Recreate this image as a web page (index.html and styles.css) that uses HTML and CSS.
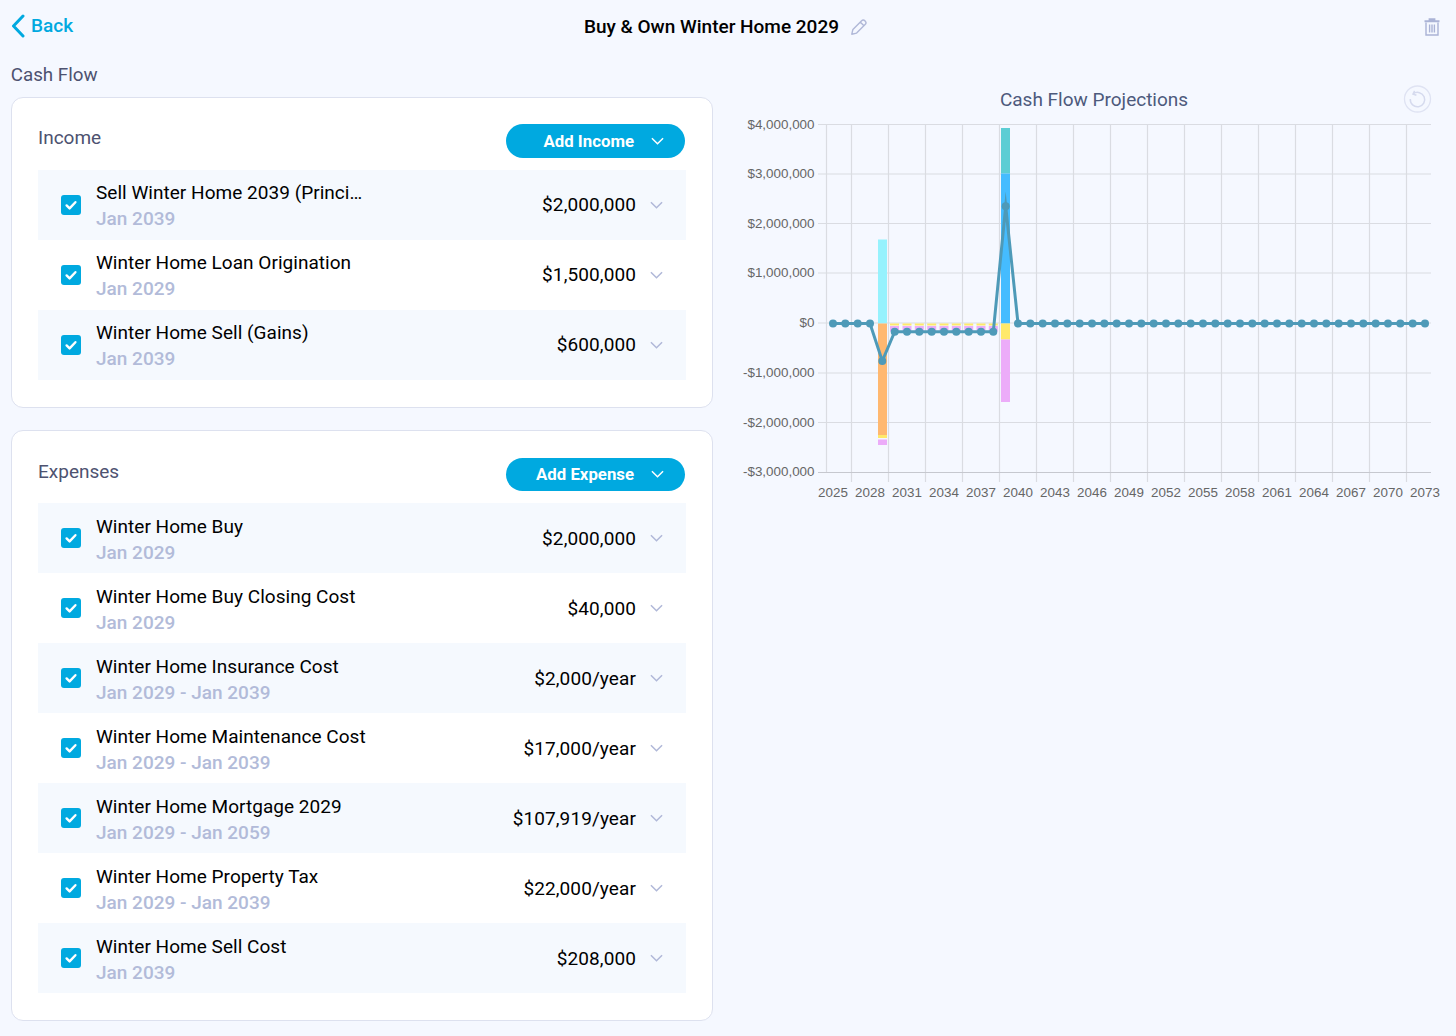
FILE: index.html
```html
<!DOCTYPE html>
<html lang="en">
<head>
<meta charset="utf-8">
<title>Buy &amp; Own Winter Home 2029</title>
<link rel="stylesheet" href="styles.css">
</head>
<body>
<svg class="defs" width="0" height="0" aria-hidden="true">
  <defs>
    <symbol id="check" viewBox="0 0 20 20"><path d="M5.6 10.4 8.6 13.4 14.4 7.2" fill="none" stroke="#fff" stroke-width="2.4" stroke-linecap="round" stroke-linejoin="round"/></symbol>
    <symbol id="chev" viewBox="0 0 14 8"><path d="M1 1 7 7 13 1" fill="none" stroke="currentColor" stroke-width="1.6"/></symbol>
    <marker id="dot" markerUnits="userSpaceOnUse" markerWidth="10" markerHeight="10" refX="5" refY="5"><circle cx="5" cy="5" r="4" fill="#4e9ab8"/></marker>
  </defs>
</svg>
<header class="topbar">
  <a class="back" href="#">
    <svg class="back-icon" viewBox="0 0 14 24" width="14" height="24"><path d="M12 2 2.5 12 12 22" fill="none" stroke="currentColor" stroke-width="3" stroke-linecap="round" stroke-linejoin="round"/></svg>
    <span>Back</span>
  </a>
  <div class="title-wrap">
    <h1 class="title">Buy &amp; Own Winter Home 2029</h1>
    <svg class="pencil" viewBox="0 0 16 16" width="16" height="16"><path d="M.8 15.2 1.9 10.4 10.4 1.9a2.6 2.6 0 0 1 3.7 3.7L5.6 14.1ZM9.2 3.1 12.9 6.8" fill="none" stroke="currentColor" stroke-width="1.4" stroke-linejoin="round"/></svg>
  </div>
  <svg class="trash" viewBox="0 0 16 18" width="16" height="18"><path d="M.5 3.2h15M5.6 3V1.2h4.8V3" fill="none" stroke="currentColor" stroke-width="2"/><path d="M2 4.5V17h12V4.5M5.6 6.5v8M8 6.5v8M10.4 6.5v8" fill="none" stroke="currentColor" stroke-width="1.4"/></svg>
</header>
<h2 class="section-title">Cash Flow</h2>
<main class="layout">
  <div class="cards">
    <section class="card">
      <div class="card-head">
        <h3 class="card-title">Income</h3>
        <button class="add-btn"><span>Add Income</span><svg class="btn-chev" width="13" height="8"><use href="#chev"/></svg></button>
      </div>
      <ul class="rows">
        <li class="row"><span class="check"><svg width="20" height="20"><use href="#check"/></svg></span><div class="info"><div class="name">Sell Winter Home 2039 (Principal)</div><div class="date">Jan 2039</div></div><span class="amount">$2,000,000</span><svg class="row-chev" width="13" height="8"><use href="#chev"/></svg></li>
        <li class="row"><span class="check"><svg width="20" height="20"><use href="#check"/></svg></span><div class="info"><div class="name">Winter Home Loan Origination</div><div class="date">Jan 2029</div></div><span class="amount">$1,500,000</span><svg class="row-chev" width="13" height="8"><use href="#chev"/></svg></li>
        <li class="row"><span class="check"><svg width="20" height="20"><use href="#check"/></svg></span><div class="info"><div class="name">Winter Home Sell (Gains)</div><div class="date">Jan 2039</div></div><span class="amount">$600,000</span><svg class="row-chev" width="13" height="8"><use href="#chev"/></svg></li>
      </ul>
    </section>
    <section class="card">
      <div class="card-head">
        <h3 class="card-title">Expenses</h3>
        <button class="add-btn"><span>Add Expense</span><svg class="btn-chev" width="13" height="8"><use href="#chev"/></svg></button>
      </div>
      <ul class="rows">
        <li class="row"><span class="check"><svg width="20" height="20"><use href="#check"/></svg></span><div class="info"><div class="name">Winter Home Buy</div><div class="date">Jan 2029</div></div><span class="amount">$2,000,000</span><svg class="row-chev" width="13" height="8"><use href="#chev"/></svg></li>
        <li class="row"><span class="check"><svg width="20" height="20"><use href="#check"/></svg></span><div class="info"><div class="name">Winter Home Buy Closing Cost</div><div class="date">Jan 2029</div></div><span class="amount">$40,000</span><svg class="row-chev" width="13" height="8"><use href="#chev"/></svg></li>
        <li class="row"><span class="check"><svg width="20" height="20"><use href="#check"/></svg></span><div class="info"><div class="name">Winter Home Insurance Cost</div><div class="date">Jan 2029 - Jan 2039</div></div><span class="amount">$2,000/year</span><svg class="row-chev" width="13" height="8"><use href="#chev"/></svg></li>
        <li class="row"><span class="check"><svg width="20" height="20"><use href="#check"/></svg></span><div class="info"><div class="name">Winter Home Maintenance Cost</div><div class="date">Jan 2029 - Jan 2039</div></div><span class="amount">$17,000/year</span><svg class="row-chev" width="13" height="8"><use href="#chev"/></svg></li>
        <li class="row"><span class="check"><svg width="20" height="20"><use href="#check"/></svg></span><div class="info"><div class="name">Winter Home Mortgage 2029</div><div class="date">Jan 2029 - Jan 2059</div></div><span class="amount">$107,919/year</span><svg class="row-chev" width="13" height="8"><use href="#chev"/></svg></li>
        <li class="row"><span class="check"><svg width="20" height="20"><use href="#check"/></svg></span><div class="info"><div class="name">Winter Home Property Tax</div><div class="date">Jan 2029 - Jan 2039</div></div><span class="amount">$22,000/year</span><svg class="row-chev" width="13" height="8"><use href="#chev"/></svg></li>
        <li class="row"><span class="check"><svg width="20" height="20"><use href="#check"/></svg></span><div class="info"><div class="name">Winter Home Sell Cost</div><div class="date">Jan 2039</div></div><span class="amount">$208,000</span><svg class="row-chev" width="13" height="8"><use href="#chev"/></svg></li>
      </ul>
    </section>
  </div>
  <svg class="chart" viewBox="730 85 716 420" width="716" height="420">
    <text class="chart-title" x="1094" y="106" text-anchor="middle">Cash Flow Projections</text>
    <circle class="reset-ring" cx="1417.5" cy="99" r="13"/>
    <path class="reset-arrow" d="M1413.2 93.8a7.2 7.2 0 1 1-2.9 5.2M1414.6 90.8l-1.6 3.2 3.4 1.2"/>
    <g class="grid">
      <path d="M818 124.5H1431M818 174H1431M818 223.5H1431M818 273H1431M818 323H1431M818 373H1431M818 422.5H1431"/>
      <path d="M826.5 124.5V472M851.5 124.5V482M888.5 124.5V482M925.5 124.5V482M962.5 124.5V482M999.5 124.5V482M1036.5 124.5V482M1073.5 124.5V482M1110.5 124.5V482M1147.5 124.5V482M1184.5 124.5V482M1221.5 124.5V482M1258.5 124.5V482M1295.5 124.5V482M1332.5 124.5V482M1369.5 124.5V482M1406.5 124.5V482"/>
    </g>
    <path class="axis" d="M818 472.5H1431"/>
    <g class="ylabels" text-anchor="end">
      <text x="814.5" y="128.5">$4,000,000</text>
      <text x="814.5" y="178">$3,000,000</text>
      <text x="814.5" y="227.5">$2,000,000</text>
      <text x="814.5" y="277">$1,000,000</text>
      <text x="814.5" y="327">$0</text>
      <text x="814.5" y="377">-$1,000,000</text>
      <text x="814.5" y="426.5">-$2,000,000</text>
      <text x="814.5" y="476">-$3,000,000</text>
    </g>
    <g class="xlabels" text-anchor="middle">
      <text x="833" y="497">2025</text><text x="870" y="497">2028</text><text x="907" y="497">2031</text><text x="944" y="497">2034</text><text x="981" y="497">2037</text><text x="1018" y="497">2040</text><text x="1055" y="497">2043</text><text x="1092" y="497">2046</text><text x="1129" y="497">2049</text><text x="1166" y="497">2052</text><text x="1203" y="497">2055</text><text x="1240" y="497">2058</text><text x="1277" y="497">2061</text><text x="1314" y="497">2064</text><text x="1351" y="497">2067</text><text x="1388" y="497">2070</text><text x="1425" y="497">2073</text>
    </g>
    <g class="bars">
      <rect class="b-cyan" x="878" y="239.5" width="9" height="84"/>
      <rect class="b-orange" x="878" y="323.5" width="9" height="111.5"/>
      <rect class="b-yellow" x="878" y="435" width="9" height="3"/>
      <rect class="b-pink" x="878" y="439.5" width="9" height="5.5"/>
      <rect class="b-teal" x="1001" y="128" width="9" height="45.5"/>
      <rect class="b-blue" x="1001" y="173.5" width="9" height="150"/>
      <rect class="b-yellow" x="1001" y="323.5" width="9" height="16"/>
      <rect class="b-pink" x="1001" y="339.5" width="9" height="62.5"/>
      <g class="b-yellow"><rect x="890" y="323.5" width="9" height="2"/><rect x="902.5" y="323.5" width="9" height="2"/><rect x="914.8" y="323.5" width="9" height="2"/><rect x="927.2" y="323.5" width="9" height="2"/><rect x="939.5" y="323.5" width="9" height="2"/><rect x="951.8" y="323.5" width="9" height="2"/><rect x="964.2" y="323.5" width="9" height="2"/><rect x="976.5" y="323.5" width="9" height="2"/><rect x="988.8" y="323.5" width="9" height="2"/></g>
      <g class="b-pink"><rect x="890" y="326" width="9" height="5.5"/><rect x="902.5" y="326" width="9" height="5.5"/><rect x="914.8" y="326" width="9" height="5.5"/><rect x="927.2" y="326" width="9" height="5.5"/><rect x="939.5" y="326" width="9" height="5.5"/><rect x="951.8" y="326" width="9" height="5.5"/><rect x="964.2" y="326" width="9" height="5.5"/><rect x="976.5" y="326" width="9" height="5.5"/><rect x="988.8" y="326" width="9" height="5.5"/></g>
    </g>
    <polyline class="line" points="833,323.5 845.3,323.5 857.7,323.5 870,323.5 882.3,361 894.7,331.7 907,331.7 919.3,331.7 931.7,331.7 944,331.7 956.3,331.7 968.7,331.7 981,331.7 993.3,331.7 1005.7,206.3 1018,323.5 1030.3,323.5 1042.7,323.5 1055,323.5 1067.3,323.5 1079.7,323.5 1092,323.5 1104.3,323.5 1116.7,323.5 1129,323.5 1141.3,323.5 1153.7,323.5 1166,323.5 1178.3,323.5 1190.7,323.5 1203,323.5 1215.3,323.5 1227.7,323.5 1240,323.5 1252.3,323.5 1264.7,323.5 1277,323.5 1289.3,323.5 1301.7,323.5 1314,323.5 1326.3,323.5 1338.7,323.5 1351,323.5 1363.3,323.5 1375.7,323.5 1388,323.5 1400.3,323.5 1412.7,323.5 1425,323.5"/>
  </svg>
</main>
</body>
</html>
```
FILE: styles.css
```css
* { box-sizing: border-box; }
html, body { margin: 0; padding: 0; }
body {
  background: #f5f8ff;
  font-family: Roboto, "Liberation Sans", sans-serif;
  color: #000;
  height: 1036px;
  overflow: hidden;
}
.defs { position: absolute; }
.topbar {
  display: grid;
  grid-template-columns: 1fr auto 1fr;
  align-items: center;
  height: 53px;
  padding: 0 16px 0 11px;
}
.back {
  display: flex;
  align-items: center;
  gap: 6px;
  padding-bottom: 2px;
  color: #00a9e0;
  text-decoration: none;
  font-size: 19px;
  font-weight: 500;
}
.title-wrap { display: flex; align-items: center; gap: 12px; }
.title { margin: 0; font-size: 19px; font-weight: 500; }
.pencil { color: #b0b8d8; }
.trash { color: #aab3d6; justify-self: end; }
.section-title {
  margin: 11px 0 10.6px 10.7px;
  font-size: 18.8px;
  line-height: 22px;
  font-weight: 400;
  color: #4d5270;
}
.layout { display: flex; align-items: flex-start; gap: 17px; padding-left: 11px; }
.cards { display: flex; flex-direction: column; gap: 22.7px; width: 702px; flex: none; }
.card {
  background: #fff;
  border: 1px solid #dde1ef;
  border-radius: 12px;
  padding: 26px 26px 27px;
}
.card-head {
  display: flex;
  justify-content: space-between;
  align-items: flex-start;
  height: 46px;
}
.card-title {
  margin: 2.6px 0 0;
  font-size: 19px;
  line-height: 24px;
  font-weight: 400;
  color: #4d5270;
}
.add-btn {
  display: flex;
  align-items: center;
  justify-content: flex-end;
  gap: 17px;
  width: 179px;
  height: 33.6px;
  margin: .4px 1px 0 0;
  padding: 0 21px 0 0;
  border: 0;
  border-radius: 17px;
  background: #00a9e0;
  color: #fff;
  font: 700 16.8px Roboto, sans-serif;
}
.btn-chev { color: #fff; }
.rows { list-style: none; margin: 0; padding: 0; }
.row {
  display: flex;
  align-items: center;
  height: 70px;
  padding: 0 23px 0 22.7px;
}
.row:nth-child(odd) { background: #f5f9fe; }
.check {
  flex: none;
  width: 20px;
  height: 20px;
  margin-right: 15.3px;
  border-radius: 3px;
  background: #00a9e0;
}
.check svg { display: block; }
.info { flex: 1; min-width: 0; padding-top: 2.5px; }
.name {
  max-width: 272px;
  overflow: hidden;
  white-space: nowrap;
  text-overflow: ellipsis;
  font-size: 19px;
  line-height: 26px;
  letter-spacing: .03px;
}
.date { font-size: 19px; line-height: 26px; font-weight: 500; color: #b2bbd9; }
.amount { font-size: 19px; letter-spacing: .1px; }
.row-chev { flex: none; margin-left: 14px; color: #b0b8d8; }
.chart { flex: none; display: block; margin-top: -12px; }
.chart-title { font: 400 19px Roboto, sans-serif; fill: #4d5a7c; }
.reset-ring { fill: none; stroke: #dfe3f3; stroke-width: 1.3; }
.reset-arrow { fill: none; stroke: #d5daee; stroke-width: 1.5; }
.grid path { fill: none; stroke: #dadce2; stroke-width: 1.2; }
.axis { fill: none; stroke: #c6c8cf; stroke-width: 1; }
.ylabels text, .xlabels text { font: 13.4px "Liberation Sans", Arial, sans-serif; fill: #666; }
.b-cyan { fill: #96f2fd; }
.b-orange { fill: #ffb870; }
.b-yellow { fill: #ffe96a; }
.b-pink { fill: #ecacf9; }
.b-teal { fill: #5ccdd4; }
.b-blue { fill: #45bcff; }
.line {
  fill: none;
  stroke: #4e9ab8;
  stroke-width: 3;
  stroke-miterlimit: 12;
  marker-start: url(#dot);
  marker-mid: url(#dot);
  marker-end: url(#dot);
}
```
